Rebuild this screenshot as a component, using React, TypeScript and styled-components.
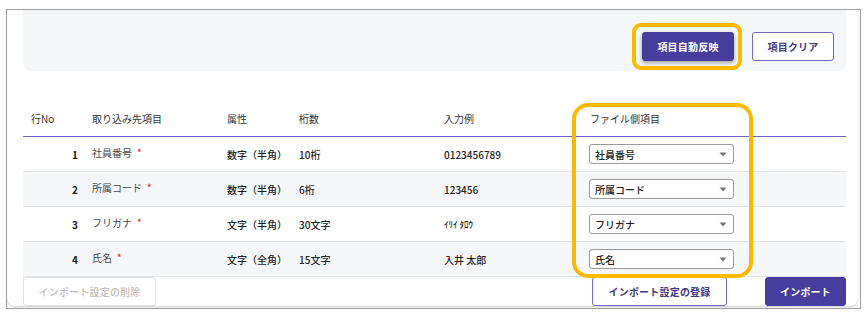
import styled, { createGlobalStyle } from 'styled-components';

type Row = {
  no: number;
  name: string;
  kind: string;
  digits: string;
  sample: string;
  file: string;
};

const rows: Row[] = [
  { no: 1, name: '社員番号', kind: '数字（半角）', digits: '10桁', sample: '0123456789', file: '社員番号' },
  { no: 2, name: '所属コード', kind: '数字（半角）', digits: '6桁', sample: '123456', file: '所属コード' },
  { no: 3, name: 'フリガナ', kind: '文字（半角）', digits: '30文字', sample: 'ｲﾘｲ ﾀﾛｳ', file: 'フリガナ' },
  { no: 4, name: '氏名', kind: '文字（全角）', digits: '15文字', sample: '入井 太郎', file: '氏名' },
];

const Caret = () => (
  <svg width="8" height="5" viewBox="0 0 8 5">
    <path d="M0.5 0.5 L7.5 0.5 L4 4.5 Z" fill="#777" />
  </svg>
);

const App = () => {
  return (
    <>
      <GlobalStyle />
      <Page>
        <Frame>
          <Card>
            <Panel>
              <Highlight>
                <FilledButton $shadow>項目自動反映</FilledButton>
                <Ring $inset="-9px -8px -9px -10px" $radius="9px" />
              </Highlight>
              <OutlineButton $width="82px">項目クリア</OutlineButton>
            </Panel>
            <Table>
              <Header>
                <Cell>行No</Cell>
                <Cell>取り込み先項目</Cell>
                <Cell>属性</Cell>
                <Cell>桁数</Cell>
                <Cell>入力例</Cell>
                <Cell>ファイル側項目</Cell>
              </Header>
              {rows.map((row, i) => (
                <BodyRow key={row.no} $striped={i % 2 === 1}>
                  <NoCell>{row.no}</NoCell>
                  <NameCell>
                    {row.name}
                    <Required>*</Required>
                  </NameCell>
                  <ValueCell>{row.kind}</ValueCell>
                  <ValueCell>{row.digits}</ValueCell>
                  <ValueCell $small={row.no === 3}>{row.sample}</ValueCell>
                  <Cell>
                    <SelectBox>
                      <span>{row.file}</span>
                      <Caret />
                    </SelectBox>
                  </Cell>
                </BodyRow>
              ))}
              <ColumnRing />
            </Table>
            <Footer>
              <DisabledButton>インポート設定の削除</DisabledButton>
              <FooterRight>
                <OutlineButton $width="135px">インポート設定の登録</OutlineButton>
                <FilledButton $width="81px">インポート</FilledButton>
              </FooterRight>
            </Footer>
          </Card>
        </Frame>
      </Page>
    </>
  );
};

const GlobalStyle = createGlobalStyle`
  body {
    margin: 0;
    background: #fff;
    font-family: "Noto Sans CJK JP", "Noto Sans", sans-serif;
    color: #333;
  }
  * {
    box-sizing: border-box;
  }
`;

const Page = styled.div`
  padding: 9px 0 0 6px;
`;

const Frame = styled.div`
  width: 855px;
  height: 300px;
  border: 1px solid #9d9d9d;
  overflow: hidden;
  background: #fff;
`;

const Card = styled.div`
  height: 296px;
  margin-right: 2px;
  padding: 0 12px 0 16px;
  border-radius: 0 0 8px 8px;
  box-shadow: 0 1px 2px rgba(0, 0, 0, 0.22);
  background: #fff;
`;

const Panel = styled.div`
  display: flex;
  justify-content: flex-end;
  align-items: flex-start;
  gap: 18px;
  height: 61px;
  padding: 22px 12px 0 0;
  background: #f6f7f9;
  border-radius: 0 0 8px 8px;
`;

const Highlight = styled.div`
  position: relative;
  display: flex;
`;

const Ring = styled.div<{ $inset: string; $radius: string }>`
  position: absolute;
  inset: ${({ $inset }) => $inset};
  border: 4px solid #fbb900;
  border-radius: ${({ $radius }) => $radius};
  pointer-events: none;
`;

const ButtonBase = styled.button<{ $width?: string }>`
  width: ${({ $width }) => $width || '92px'};
  height: 29px;
  padding: 0;
  border-radius: 3px;
  font-family: "Noto Sans CJK JP", "Noto Sans", sans-serif;
  font-size: 10px;
  font-weight: 700;
  letter-spacing: 0.2px;
  cursor: pointer;
`;

const FilledButton = styled(ButtonBase)<{ $shadow?: boolean }>`
  background: #473d9c;
  border: 1px solid #473d9c;
  color: #fff;
  box-shadow: ${({ $shadow }) => ($shadow ? '0 2px 4px rgba(0, 0, 0, 0.35)' : 'none')};
`;

const OutlineButton = styled(ButtonBase)`
  background: #fff;
  border: 1px solid #7069bb;
  color: #3f3884;
`;

const DisabledButton = styled(ButtonBase)`
  width: 133px;
  background: #fff;
  border: 1px solid #e0e0e0;
  color: #bdbdbd;
  font-weight: 500;
  cursor: default;
`;

const Table = styled.div`
  position: relative;
  margin-top: 30px;
`;

const grid = `
  display: grid;
  grid-template-columns: 61px 135px 72px 145px 146px 1fr;
  align-items: center;
`;

const Header = styled.div`
  ${grid};
  height: 36px;
  border-bottom: 1px solid #6b63c4;
  font-size: 10px;
  color: #333;
`;

const BodyRow = styled.div<{ $striped: boolean }>`
  ${grid};
  height: 35px;
  border-bottom: 1px solid #e4e4e6;
  background: ${({ $striped }) => ($striped ? '#f6f7f9' : '#fff')};
  font-size: 10px;
`;

const Cell = styled.div`
  padding-left: 8px;
  white-space: nowrap;
`;

const NoCell = styled.div`
  text-align: right;
  padding-right: 6px;
  font-weight: 700;
  color: #222;
`;

const NameCell = styled(Cell)`
  color: #444;
  margin-top: -3px;
`;

const Required = styled.span`
  color: #e53935;
  font-size: 9px;
  font-weight: 700;
  margin-left: 5px;
  position: relative;
  top: -1px;
`;

const ValueCell = styled(Cell)<{ $small?: boolean }>`
  color: #222;
  font-weight: 500;
  font-size: ${({ $small }) => ($small ? '9px' : '10px')};
`;

const SelectBox = styled.div`
  display: flex;
  align-items: center;
  justify-content: space-between;
  width: 145px;
  height: 20px;
  margin-left: -1px;
  padding: 0 6px 0 5px;
  border: 1px solid #9a9a9a;
  border-radius: 3px;
  background: #fff;
  color: #222;
  font-weight: 500;
  font-size: 10px;
`;

const ColumnRing = styled.div`
  position: absolute;
  top: 2px;
  left: 549px;
  width: 181px;
  height: 175px;
  border: 4px solid #fbb900;
  border-radius: 16px;
  pointer-events: none;
`;

const Footer = styled.div`
  display: flex;
  justify-content: space-between;
  align-items: flex-start;
`;

const FooterRight = styled.div`
  display: flex;
  gap: 38px;
`;

export default App;
